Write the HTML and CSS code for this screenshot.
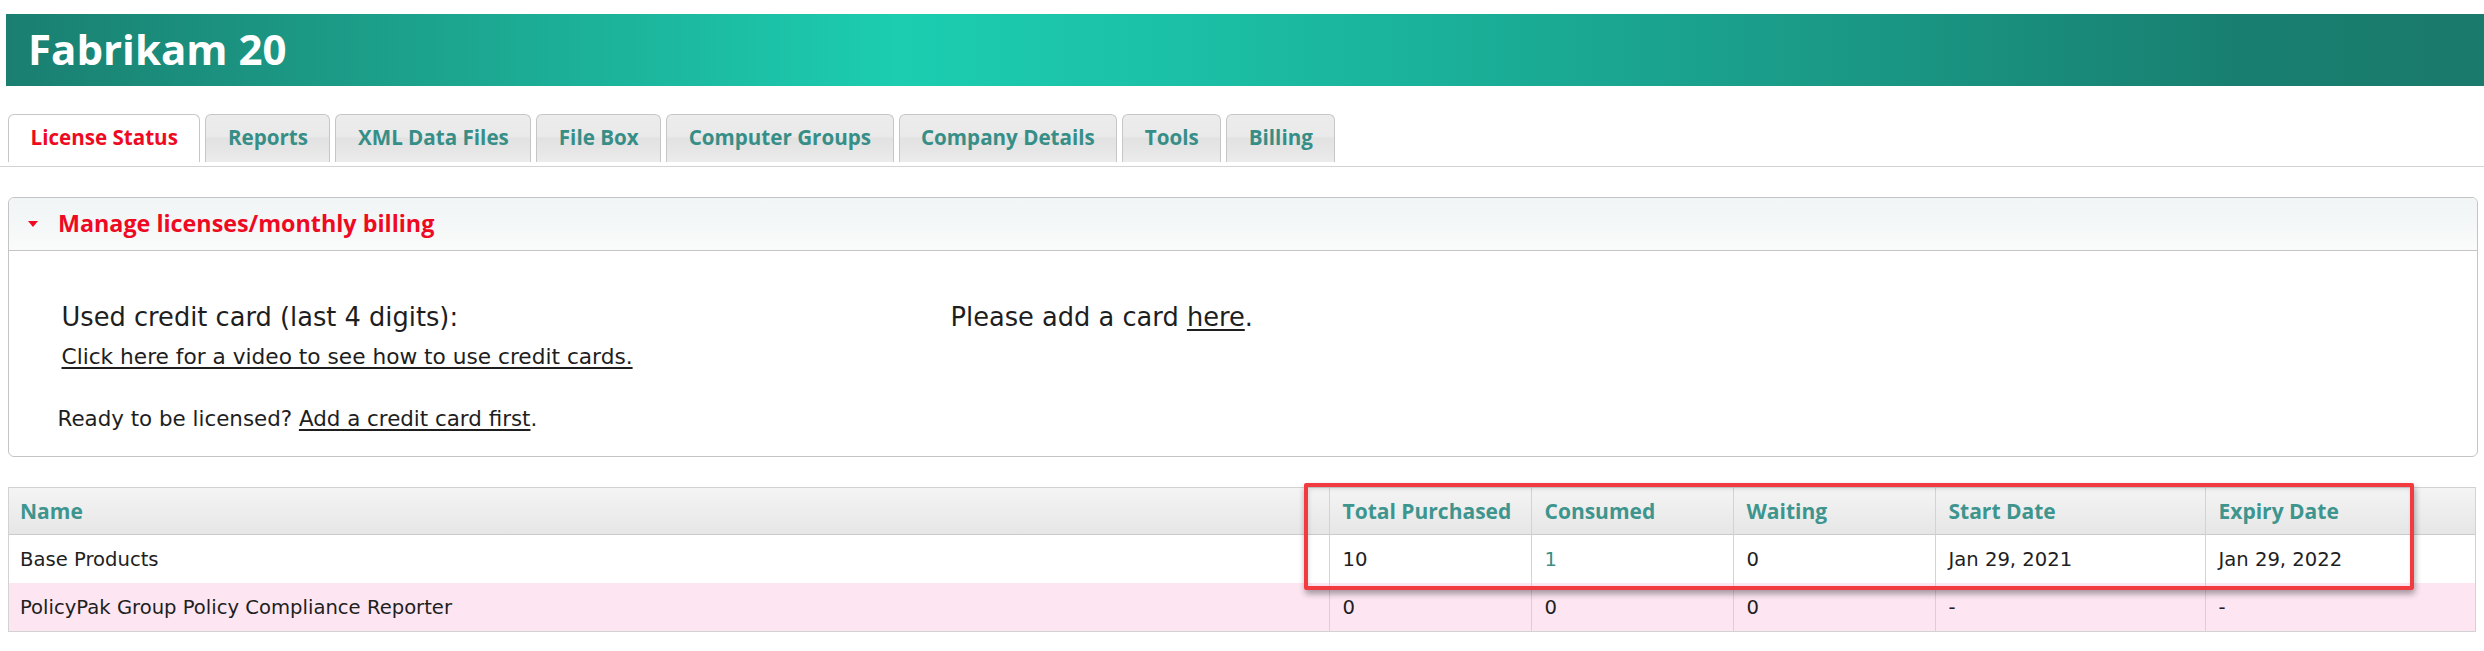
FILE: index.html
```html
<!DOCTYPE html>
<html lang="en">
<head>
<meta charset="utf-8">
<title>Fabrikam 20 - License Status</title>
<link rel="stylesheet" href="styles.css">
</head>
<body>
<header class="banner">
  <h1 class="brand">Fabrikam 20</h1>
</header>

<nav class="tabs">
  <a class="tab active" href="#">License Status</a>
  <a class="tab" href="#">Reports</a>
  <a class="tab" href="#">XML Data Files</a>
  <a class="tab" href="#">File Box</a>
  <a class="tab" href="#">Computer Groups</a>
  <a class="tab" href="#">Company Details</a>
  <a class="tab" href="#">Tools</a>
  <a class="tab" href="#">Billing</a>
</nav>

<section class="panel">
  <div class="panel-head">
    <span class="caret"></span>
    <span class="panel-title">Manage licenses/monthly billing</span>
  </div>
  <div class="panel-body">
    <div class="card-row">
      <div class="card-col">
        <p class="lead">Used credit card (last 4 digits):</p>
        <a class="video-link" href="#">Click here for a video to see how to use credit cards.</a>
      </div>
      <p class="lead">Please add a card <a class="plain-link" href="#">here</a>.</p>
    </div>
    <p class="ready">Ready to be licensed? <a class="plain-link" href="#">Add a credit card first</a>.</p>
  </div>
</section>

<div class="grid-wrap">
  <table class="lic">
    <colgroup>
      <col>
      <col class="c-num">
      <col class="c-num">
      <col class="c-num">
      <col class="c-date">
      <col class="c-date">
    </colgroup>
    <thead>
      <tr>
        <th>Name</th>
        <th>Total Purchased</th>
        <th>Consumed</th>
        <th>Waiting</th>
        <th>Start Date</th>
        <th>Expiry Date</th>
      </tr>
    </thead>
    <tbody>
      <tr>
        <td>Base Products</td>
        <td>10</td>
        <td><a class="qty-link" href="#">1</a></td>
        <td>0</td>
        <td>Jan 29, 2021</td>
        <td>Jan 29, 2022</td>
      </tr>
      <tr class="alt">
        <td>PolicyPak Group Policy Compliance Reporter</td>
        <td>0</td>
        <td>0</td>
        <td>0</td>
        <td>-</td>
        <td>-</td>
      </tr>
    </tbody>
  </table>
  <div class="highlight"></div>
</div>
</body>
</html>
```

FILE: styles.css
```css
html, body {
  margin: 0;
  padding: 0;
  background: #ffffff;
}

body {
  font-family: "DejaVu Sans", "Liberation Sans", sans-serif;
  color: #1e1e1e;
}

/* ---------- banner ---------- */
.banner {
  margin: 14px 0 0 6px;
  height: 72px;
  padding-left: 22px;
  background: linear-gradient(to right,
    #1a7f70 0%,
    #1ca58f 18%,
    #1ccdb0 36%,
    #1bbfa5 48%,
    #1aaa94 62%,
    #1a9684 76%,
    #187f70 90%,
    #1a7a6c 100%);
}

.brand {
  margin: 0;
  font: 700 42px/70px "Open Sans", sans-serif;
  color: #ffffff;
}

/* ---------- tabs ---------- */
.tabs {
  display: flex;
  gap: 5px;
  margin-top: 28px;
  padding: 0 0 4px 8px;
  border-bottom: 1px solid #d3d3d3;
}

.tab {
  box-sizing: border-box;
  display: block;
  height: 48px;
  padding: 0 21.5px;
  border: 1px solid #c6c6c6;
  border-bottom: none;
  border-radius: 6px 6px 0 0;
  font: 700 20.6px/45px "Open Sans", sans-serif;
  color: #378e87;
  text-decoration: none;
  background: linear-gradient(to bottom,
    #ececec 0%,
    #eaeaea 45%,
    #e2e2e2 50%,
    #e6e6e6 75%,
    #ececec 100%);
}

.tab.active {
  background: #ffffff;
  color: #ee0a22;
}

/* ---------- panel ---------- */
.panel {
  margin: 30px 6px 0 8px;
  border: 1px solid #c4c4c4;
  border-radius: 6px;
}

.panel-head {
  display: flex;
  align-items: center;
  gap: 20px;
  height: 52px;
  padding-left: 19px;
  border-bottom: 1px solid #c4c4c4;
  border-radius: 6px 6px 0 0;
  background: linear-gradient(to bottom, #f2f5f6 0%, #f4f7f7 45%, #fafbfb 100%);
}

.caret {
  width: 0;
  height: 0;
  border-left: 5px solid transparent;
  border-right: 5px solid transparent;
  border-top: 6px solid #ee0a22;
}

.panel-title {
  font: 700 23.3px/30px "Open Sans", sans-serif;
  color: #ee0a22;
  margin-top: -2px;
}

.panel-body {
  padding: 50px 0 23px 48.5px;
}

.card-row {
  display: flex;
  margin-left: 4px;
}

.card-col {
  width: 889px;
}

.lead {
  margin: 0;
  font-size: 25.7px;
  line-height: 32px;
}

.video-link {
  display: inline-block;
  margin-top: 9px;
  font-size: 21.7px;
  line-height: 30px;
  color: #1e1e1e;
  text-decoration: underline;
  text-decoration-thickness: 2px;
  text-underline-offset: 3px;
}

.plain-link {
  color: #1e1e1e;
  text-decoration: underline;
  text-decoration-thickness: 2px;
  text-underline-offset: 3px;
}

.ready {
  margin: 33px 0 0;
  font-size: 21.4px;
  line-height: 28px;
}

/* ---------- license table ---------- */
.grid-wrap {
  position: relative;
  margin: 30px 8px 0 8px;
}

.lic {
  width: 100%;
  table-layout: fixed;
  border-collapse: separate;
  border-spacing: 0;
  border: 1px solid #d2d2d2;
}

.c-num {
  width: 202px;
}

.c-date {
  width: 270px;
}

.lic th {
  height: 46px;
  padding: 0 12px 0 12.5px;
  text-align: left;
  vertical-align: middle;
  font: 700 21px "Open Sans", sans-serif;
  color: #3d958e;
  background: linear-gradient(to bottom, #f4f4f4 0%, #ececec 60%, #e6e6e6 100%);
  border-bottom: 1px solid #cacaca;
}

.lic td {
  height: 48px;
  padding: 0 12px 0 12.5px;
  vertical-align: middle;
  font-size: 19.6px;
  color: #221e1e;
  white-space: nowrap;
}

.lic th:first-child,
.lic td:first-child {
  padding-left: 11px;
}

.lic th + th,
.lic td + td {
  border-left: 1px solid #d3d3d3;
}

.lic tr.alt td {
  background: #fde6f2;
}

.qty-link {
  color: #3a8f87;
  text-decoration: none;
}

/* annotation box drawn over the table */
.highlight {
  position: absolute;
  left: 1296px;
  top: -4px;
  width: 1110px;
  height: 107px;
  box-sizing: border-box;
  border: 4px solid #f23b41;
  border-radius: 2px;
  box-shadow: 1px 4px 6px rgba(0, 0, 0, 0.35), inset 1px 2px 4px rgba(0, 0, 0, 0.12);
  pointer-events: none;
}
```
